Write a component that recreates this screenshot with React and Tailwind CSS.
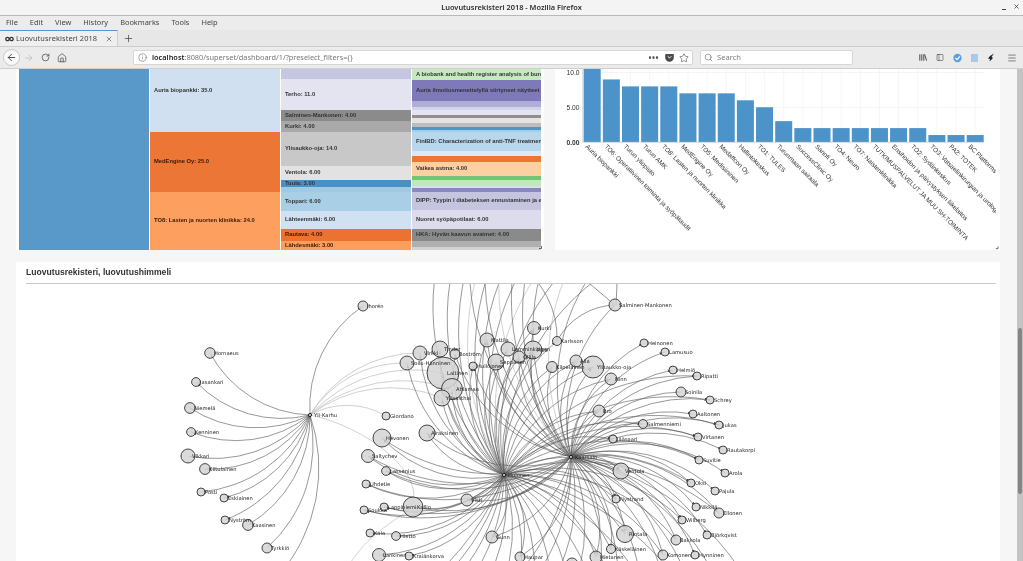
import React from "react";
import { ArrowLeft, ArrowRight, RotateCw, Home, Info, Star, Search, Menu, X, Plus, PanelLeft } from "lucide-react";

const UI = { fontFamily: '"Noto Sans", sans-serif' };

function Cell({ h, bg, label, dark, pb }) {
  return (
    <div
      className="flex items-center pl-[4px] shrink-0 whitespace-nowrap overflow-hidden font-bold text-[5.8px] leading-none"
      style={{ height: h, background: bg, color: dark ? "#3a1a08" : "#333", paddingBottom: pb || 0 }}
    >
      {label}
    </div>
  );
}

const col2 = [
  [63, "#d0e0f1", "Auria biopankki: 35.0", 0, 20],
  [60, "#ec7636", "MedEngine Oy: 25.0", 1],
  [58, "#fd9f5e", "TO8: Lasten ja nuorten klinikka: 24.0", 1],
];
const col3 = [
  [10, "#c5c7e2"],
  [31, "#e4e4f1", "Terho: 11.0"],
  [11, "#8b8b8b", "Salminen-Mankonen: 4.00"],
  [11, "#a9a9a9", "Kurki: 4.00"],
  [34, "#c8c8c8", "Ylisaukko-oja: 14.0"],
  [14, "#e2e2e2", "Ventola: 6.00"],
  [7, "#4a90c5", "Tuula: 3.00"],
  [5, "#9fcae1"],
  [19, "#a9cfe6", "Toppari: 6.00"],
  [18, "#d0e1f2", "Lähteenmäki: 6.00"],
  [12, "#ec7232", "Rautava: 4.00", 1],
  [9, "#fd9e5c", "Lähdesmäki: 3.00", 1],
];
const col4 = [
  [11, "#c7e9c0", "A biobank and health register analysis of burd"],
  [21, "#7e79b8", "Auria ilmoitusmenettelyllä siirtyneet näytteet j"],
  [6, "#b0aed6"],
  [3, "#d3d3ea"],
  [5, "#e4e4f1"],
  [3, "#8f8f8f"],
  [5, "#e4e4e4"],
  [4, "#bdbdbd"],
  [3, "#4f95c8"],
  [2, "#a8cde8"],
  [19, "#b9d7ec", "FinIBD: Characterization of anti-TNF treatment"],
  [5, "#dbe9f5"],
  [6, "#ed7637"],
  [14, "#fdd0a2", "Vaikea astma: 4.00"],
  [4, "#74c476"],
  [6, "#c0e8b8"],
  [2, "#dcdcec"],
  [4, "#8a88b8"],
  [18, "#c6c5e0", "DIPP: Tyypin I diabeteksen ennustaminen ja eh"],
  [19, "#dcdcec", "Nuoret syöpäpotilaat: 6.00"],
  [12, "#8a8a8a", "HKA: Hyvän kaavun avaimet: 4.00"],
  [6, "#b0b0b0"],
  [3, "#d2d2d2"],
];

function Column({ cells, w }) {
  return (
    <div className="flex flex-col overflow-hidden h-[181px]" style={{ width: w }}>
      {cells.map((c, i) => (
        <Cell key={i} h={c[0]} bg={c[1]} label={c[2]} dark={c[3]} pb={c[4]} />
      ))}
    </div>
  );
}

const bars = [
  ["Auria biopankki", 10.6],
  ["TO6: Operatiivinen toiminta ja syöpätaudit", 9],
  ["Turun yliopisto", 8],
  ["Turun AMK", 8],
  ["TO8: Lasten ja nuorten klinikka", 8],
  ["MedEngine Oy", 7],
  ["TO5: Medisiininen", 7],
  ["Medaffcon Oy", 7],
  ["Hallintokeskus", 6],
  ["TO1: TULES", 5],
  ["Turunmaan sairaala", 3],
  ["SuccessClinic Oy", 2],
  ["Sanofi Oy", 2],
  ["TO4: Neuro", 2],
  ["TO7: Naistenklinikka", 2],
  ["TUTKIMUSPALVELUT JA MUU SH-TOIMINTA", 2],
  ["Ensihoidon ja päivystyksen liikelaitos", 2],
  ["TO2: Sydänkeskus", 2],
  ["TO3: Vatsaelinkirurgian ja urologia", 1],
  ["PA2: TOTEK", 1],
  ["BC Platforms", 1],
];

function BarChart() {
  return (
    <svg viewBox="555 69 445 181" className="w-[445px] h-[181px] block" style={{ fontFamily: '"Liberation Sans", sans-serif' }}>
      <defs>
        <clipPath id="barclip"><rect x="555" y="69" width="441" height="181" /></clipPath>
      </defs>
      <g clipPath="url(#barclip)">
        {bars.map((b, i) => (
          <line key={i} x1={592.2 + 19.15 * i} x2={592.2 + 19.15 * i} y1="69" y2="142" stroke="#f0f0f0" strokeWidth="0.6" />
        ))}
        <line x1="583" x2="984" y1="107.5" y2="107.5" stroke="#ececec" strokeWidth="0.6" />
        <line x1="583" x2="984" y1="72.5" y2="72.5" stroke="#ececec" strokeWidth="0.6" />
        <line x1="582.8" x2="582.8" y1="69" y2="142" stroke="#c4c4c4" strokeWidth="0.7" />
        {bars.map((b, i) => (
          <rect key={i} x={583.7 + 19.15 * i} width="17" y={142 - b[1] * 6.95} height={b[1] * 6.95} fill="#4b93c9" />
        ))}
        <line x1="583" x2="984" y1="142.3" y2="142.3" stroke="#c4c4c4" strokeWidth="0.7" />
        <text x="579.5" y="75" textAnchor="end" fontSize="6.7" fill="#333">10.0</text>
        <text x="579.5" y="110" textAnchor="end" fontSize="6.7" fill="#333">5.00</text>
        <text x="579.5" y="144.5" textAnchor="end" fontSize="6.7" fontWeight="bold" fill="#333">0.00</text>
        {bars.map((b, i) => {
          const x = 585 + 19.15 * i;
          return (
            <text key={i} x={x} y="147" fontSize="6.4" fill="#333" transform={`rotate(45 ${x} 147)`}>
              {b[0]}
            </text>
          );
        })}
      </g>
      <path d="M998 246.5v2.2h-2.2" stroke="#444" strokeWidth="0.8" fill="none" />
    </svg>
  );
}

const nodes = [
  ["Ihorén", 363, 306, 5], ["Hornaeus", 210, 353, 5.3], ["Jasankari", 196, 382, 4.4], ["Niemelä", 190, 408, 5.4],
  ["Kenninen", 191, 432, 4.4], ["Vikkari", 188, 456, 7], ["Kiitulainen", 205, 469, 5.4], ["Posti", 201, 492, 4],
  ["Eskiainen", 224, 498, 4], ["Nyström", 225, 520, 4], ["Kaasinen", 248, 525, 5.4], ["Tyrkkiö", 267, 548, 5],
  ["Giordano", 386, 416, 4], ["Hevonen", 382, 438, 9], ["Airaksinen", 427, 433, 8], ["Saltychev", 368, 456, 6.5],
  ["Lassenius", 386, 471, 4.4], ["Uhdetie", 366, 484, 4], ["Soukka", 364, 510, 4], ["Lappiniemi", 384, 507, 4],
  ["Kallio", 413, 507, 10], ["Visti", 467, 500, 6], ["Kala", 370, 533, 4], ["Hietto", 396, 536, 4.4],
  ["Lankinen", 379, 555, 6.5], ["Kraiänkorva", 409, 556, 4], ["Virkki", 420, 353, 7], ["Tinder", 440, 349, 8],
  ["Boström", 455, 354, 5], ["Soilu-Hänninen", 407, 363, 7], ["Laitinen", 443, 373, 16], ["Ahlamaa", 452, 389, 10.5],
  ["Yliaasthai", 442, 398, 8], ["Hulkkonen", 473, 366, 4], ["Mattila", 487, 340, 7], ["Kurki", 534, 328, 6.5],
  ["Karlsson", 557, 341, 4.5], ["Lemminkäinen", 508, 349, 7], ["Pälä", 533, 350, 9], ["Ollila", 519, 357, 6],
  ["Seppänen", 496, 362, 8], ["Kilpeläinen", 552, 367, 5.5], ["Ylisaukko-oja", 593, 367, 11], ["Aila", 576, 361, 6],
  ["Ninn", 611, 379, 6], ["Salminen-Mankonen", 615, 305, 6], ["Heinonen", 644, 343, 4], ["Lamusuo", 665, 352, 4],
  ["Helmiö", 673, 370, 4], ["Ripatti", 697, 376, 4], ["Soinila", 681, 392, 5], ["Schrey", 710, 400, 4],
  ["Bro", 599, 411, 6], ["Aaltonen", 693, 414, 4], ["Jukas", 719, 425, 4], ["Salmenniemi", 643, 424, 4.5],
  ["Jääsaari", 613, 439, 4], ["Virtanen", 698, 437, 4], ["Rautakorpi", 723, 450, 4], ["Suvitie", 699, 460, 4],
  ["Arola", 725, 473, 4], ["Ventola", 621, 471, 8], ["Oksi", 691, 483, 4], ["Pajula", 715, 491, 4],
  ["Nystrand", 616, 499, 4], ["Nikkilä", 696, 507, 4], ["Ellonen", 719, 513, 5], ["Wilberg", 682, 520, 4],
  ["Björkqvist", 707, 535, 4], ["Rintala", 625, 534, 8.5], ["Bakkola", 676, 540, 5], ["Käskeläinen", 611, 549, 4.5],
  ["Hietanen", 596, 557, 6], ["Komonen", 663, 555, 5], ["Hynninen", 695, 555, 4], ["Gunn", 492, 537, 6],
  ["Haupar", 520, 557, 5], ["", 572, 564, 6],
];
const hubs = [
  ["Yli-Karhu", 310, 415], ["Hujonen", 504, 475], ["Kaarsalo", 571, 457],
];
const byName = Object.fromEntries(nodes.map((n) => [n[0], n]));
const H = { Y: hubs[0], A: hubs[1], B: hubs[2] };

const yk = ["Ihorén", "Hornaeus", "Jasankari", "Niemelä", "Kenninen", "Vikkari", "Kiitulainen", "Posti", "Eskiainen", "Nyström", "Kaasinen", "Tyrkkiö"];
const ykLight = ["Soilu-Hänninen", "Virkki", "Laitinen", "Ahlamaa", "Yliaasthai", "Giordano"];
const aNames = ["Hevonen", "Airaksinen", "Saltychev", "Lassenius", "Uhdetie", "Soukka", "Lappiniemi", "Kallio", "Visti", "Kala", "Hietto", "Lankinen", "Kraiänkorva", "Gunn", "Haupar", "Hietanen", "Rintala", "Käskeläinen", "Nystrand", "Ventola", "Soilu-Hänninen", "Virkki", "Tinder", "Boström", "Laitinen", "Ahlamaa", "Yliaasthai", "Hulkkonen", "Mattila", "Lemminkäinen", "Seppänen", "Ollila", "Pälä", "Kurki", "Karlsson", "Kilpeläinen", "Aila", "Ylisaukko-oja", "Ninn", "Bro", "Salmenniemi", "Jääsaari", "Ripatti", "Schrey", "Jukas", "Virtanen", "Suvitie", "Oksi", "Ellonen", "Wilberg", "Bakkola", "Komonen"];
const bNames = ["Salminen-Mankonen", "Heinonen", "Lamusuo", "Helmiö", "Ripatti", "Soinila", "Schrey", "Aaltonen", "Jukas", "Salmenniemi", "Jääsaari", "Virtanen", "Rautakorpi", "Suvitie", "Arola", "Ventola", "Oksi", "Pajula", "Nystrand", "Nikkilä", "Ellonen", "Wilberg", "Björkqvist", "Rintala", "Bakkola", "Käskeläinen", "Hietanen", "Komonen", "Hynninen", "Bro", "Ninn", "Ylisaukko-oja", "Aila", "Kilpeläinen", "Pälä", "Ollila", "Seppänen", "Mattila", "Visti", "Gunn", "Haupar", "Hulkkonen", "Boström", "Kurki", "Hevonen", "Airaksinen", "Saltychev", "Lassenius", "Uhdetie", "Kallio", "Lappiniemi", "Soukka"];
const aTop = [[440, 250], [462, 235], [482, 225], [500, 218], [516, 215], [532, 222], [548, 232], [565, 240], [590, 245], [610, 270]];
const bTop = [[470, 255], [488, 240], [506, 228], [524, 222], [540, 226], [556, 232], [585, 240], [600, 262]];
const aBottom = [300, 335, 370, 405, 440, 470, 495, 520, 545, 570, 600, 630, 665, 710].map((x) => [x, 640]);
const bBottom = [440, 480, 515, 550, 585, 610, 640, 670, 700, 735, 770].map((x) => [x, 630]);

function arc(s, tx, ty) {
  const dx = tx - s[1];
  const dy = ty - s[2];
  const r = Math.sqrt(dx * dx + dy * dy);
  return `M${s[1]} ${s[2]}A${r} ${r} 0 0 1 ${tx} ${ty}`;
}

function Edge({ s, x, y, light, marker, w }) {
  return (
    <path
      d={arc(s, x, y)}
      fill="none"
      stroke={light ? "#bdbdbd" : "#555"}
      strokeOpacity={light ? 0.9 : 0.8}
      strokeWidth={w || 0.75}
      markerEnd={marker ? "url(#arrow)" : undefined}
    />
  );
}

function Graph() {
  return (
    <svg viewBox="16 284 984 277" className="w-[984px] h-[277px] block" style={{ fontFamily: '"DejaVu Sans", sans-serif' }}>
      <defs>
        <marker id="arrow" viewBox="0 -5 10 10" refX="18" refY="0" markerWidth="3" markerHeight="3" orient="auto" markerUnits="userSpaceOnUse">
          <path d="M0 -5L10 0L0 5z" fill="#444" />
        </marker>
      </defs>
      {yk.map((n) => <Edge key={n} s={H.Y} x={byName[n][1]} y={byName[n][2]} marker />)}
      {ykLight.map((n) => <Edge key={n} s={H.Y} x={byName[n][1]} y={byName[n][2]} light w={0.8} />)}
      <path d="M310 415C380 430 440 490 402 515S360 550 345 570" fill="none" stroke="#c8c8c8" strokeWidth="0.8" />
      <Edge s={H.Y} x={279} y={575} />
      {aNames.map((n) => <Edge key={n} s={H.A} x={byName[n][1]} y={byName[n][2]} marker />)}
      {bNames.map((n) => <Edge key={n} s={H.B} x={byName[n][1]} y={byName[n][2]} marker />)}
      {aTop.map((p, i) => <Edge key={i} s={H.A} x={p[0]} y={p[1]} light={i % 4 === 3} />)}
      {bTop.map((p, i) => <Edge key={i} s={H.B} x={p[0]} y={p[1]} light={i % 4 === 2} />)}
      {aBottom.map((p, i) => <Edge key={i} s={H.A} x={p[0]} y={p[1]} />)}
      {bBottom.map((p, i) => <Edge key={i} s={H.B} x={p[0]} y={p[1]} />)}
      <Edge s={byName["Karlsson"]} x={615} y={305} />
      <Edge s={["", 515, 262]} x={557} y={341} />
      <path d="M590 284 L615 305 M617 284 L616 305" stroke="#666" strokeWidth="0.7" fill="none" />
      {nodes.map((n) => (
        <circle key={n[0] + n[1]} cx={n[1]} cy={n[2]} r={n[3]} fill="#d4d4d4" fillOpacity="0.85" stroke="#333" strokeWidth="0.9" />
      ))}
      {hubs.map((h) => <circle key={h[0]} cx={h[1]} cy={h[2]} r="1.6" fill="#ccc" stroke="#111" strokeWidth="0.9" />)}
      {nodes.map((n) => (
        <text key={n[0] + n[1]} x={n[1] + 4} y={n[2] + 2} fontSize="5.2" fill="#222">{n[0]}</text>
      ))}
      {hubs.map((h) => (
        <text key={h[0]} x={h[1] + 4} y={h[2] + 2} fontSize="5.2" fill="#222">{h[0]}</text>
      ))}
    </svg>
  );
}

function ToolIcon({ children, className }) {
  return <div className={"flex items-center justify-center text-[#4a4a4a] " + (className || "")}>{children}</div>;
}

function Chrome() {
  return (
    <div style={UI} className="shrink-0">
      <div className="h-[16px] bg-[#f4f4f4] border-b border-[#b9b9b9] flex items-center relative">
        <div className="w-full text-center text-[7.4px] font-semibold text-[#2e2e2e] leading-none">Luovutusrekisteri 2018 - Mozilla Firefox</div>
        <div className="absolute right-[3px] top-[3px] flex items-center gap-[7px] text-[#333]">
          <div className="w-[4px] h-px bg-[#444] mt-[5px]" />
          <X size={7} strokeWidth={2.5} />
        </div>
      </div>
      <div className="h-[14px] bg-[#ececec] flex items-center pl-[6px] gap-[12px] text-[7.4px] text-[#444] leading-none">
        <span>File</span><span>Edit</span><span>View</span><span>History</span><span>Bookmarks</span><span>Tools</span><span>Help</span>
      </div>
      <div className="h-[17px] bg-[#e7e7e7] border-b border-[#cdcdcd] flex items-stretch">
        <div className="w-[118px] shrink-0 bg-[#efefef] border-t border-t-[#5b94d6] border-r border-r-[#cfcfcf] flex items-center pl-[5px] text-[7.4px] text-[#444] leading-none whitespace-nowrap">
          <svg width="9" height="6" viewBox="0 0 18 10" fill="none" stroke="#333" strokeWidth="2.6">
            <circle cx="5" cy="5" r="3.4" /><circle cx="13" cy="5" r="3.4" />
          </svg>
          <span className="ml-[2px] tracking-[0.1px]">Luovutusrekisteri 2018</span>
          <X size={8} className="ml-auto mr-[4px] text-[#555]" />
        </div>
        <div className="flex items-center ml-[5px]"><Plus size={11} strokeWidth={1.6} className="text-[#444]" /></div>
      </div>
      <div className="h-[22px] bg-[#ebebeb] border-b border-[#cfcfcf] flex items-center">
        <div className="ml-[3px] w-[17px] h-[17px] rounded-full bg-[#fafafa] border border-[#c6c6c6] flex items-center justify-center">
          <ArrowLeft size={11} strokeWidth={1.8} className="text-[#333]" />
        </div>
        <ToolIcon className="ml-[2px] w-[14px] text-[#b5b5b5]"><ArrowRight size={10} strokeWidth={1.6} /></ToolIcon>
        <ToolIcon className="ml-[2px] w-[14px]"><RotateCw size={9} strokeWidth={2} /></ToolIcon>
        <ToolIcon className="ml-[3px] w-[14px]"><Home size={10} strokeWidth={1.8} /></ToolIcon>
        <div className="ml-[64px] w-[560px] h-[15px] bg-white border border-[#d6d6d6] rounded-[2px] flex items-center pl-[4px] pr-[2px] text-[7.35px] text-[#777] leading-none">
          <Info size={9} strokeWidth={1.5} className="text-[#666]" />
          <span className="ml-[5px] whitespace-nowrap"><span className="text-[#222] font-semibold">localhost</span>:8080/superset/dashboard/1/?preselect_filters={"{}"}</span>
          <span className="ml-auto font-bold text-[#555] tracking-[0.5px] text-[8px]">•••</span>
          <svg className="ml-[6px]" width="9" height="9" viewBox="0 0 10 10"><path d="M1 1h8a.8.8 0 0 1 .8.8V5A4.7 4.7 0 0 1 .2 5V1.8A.8.8 0 0 1 1 1z" fill="#4a4a4a" /><path d="M3 3.6l2 2 2-2" stroke="#fff" strokeWidth="1.1" fill="none" /></svg>
          <Star size={10} strokeWidth={1.4} className="ml-[5px] mr-[1px] text-[#444]" />
        </div>
        <div className="ml-[7px] w-[153px] h-[15px] bg-white border border-[#d6d6d6] rounded-[2px] flex items-center pl-[3px] text-[7.6px] text-[#808080] leading-none">
          <Search size={9} strokeWidth={1.6} className="text-[#666]" />
          <span className="ml-[4px]">Search</span>
        </div>
        <ToolIcon className="ml-[66px] w-[8px]">
          <svg width="9" height="9" viewBox="0 0 10 10" stroke="#444" strokeWidth="1.2" fill="none"><path d="M1 1v8M3.5 1v8M6 1v8M7 1l2.5 8" /></svg>
        </ToolIcon>
        <ToolIcon className="ml-[9px] w-[8px]"><PanelLeft size={9} strokeWidth={1.8} /></ToolIcon>
        <ToolIcon className="ml-[9px] w-[9px]">
          <svg width="10" height="10" viewBox="0 0 10 10"><circle cx="5" cy="5" r="4.6" fill="#5a9fe0" /><path d="M2.6 4.8l2 2 3-3.6" stroke="#fff" strokeWidth="1.3" fill="none" /></svg>
        </ToolIcon>
        <ToolIcon className="ml-[8px] w-[8px]"><div className="w-[7px] h-[8px] bg-[#a9c9e6]" /></ToolIcon>
        <ToolIcon className="ml-[9px] w-[8px]">
          <svg width="8" height="9" viewBox="0 0 8 9"><path d="M7 0.5L3 3 1 5.5l2 .5-.5 2.5L6 5 4.5 4z" fill="#222" /></svg>
        </ToolIcon>
        <ToolIcon className="ml-[12px] w-[10px]"><Menu size={10} strokeWidth={1.6} /></ToolIcon>
      </div>
    </div>
  );
}

export default function App() {
  return (
    <div className="w-[1023px] h-[561px] overflow-hidden flex flex-col bg-white blur-[0.35px]" style={{ fontFamily: '"Liberation Sans", sans-serif' }}>
      <Chrome />
      <div className="flex flex-1 min-h-0">
        <div className="w-[1017px] bg-[#f6f6f6] pl-[16px] flex flex-col gap-[12px] overflow-hidden">
          <div className="flex gap-[11px] shrink-0 h-[181px]">
            <div className="w-[528px] bg-white pl-[3px] flex gap-px relative">
              <Column cells={[[181, "#5899ca"]]} w={130} />
              <Column cells={col2} w={130} />
              <Column cells={col3} w={130} />
              <Column cells={col4} w={129} />
              <svg width="4" height="4" viewBox="0 0 4 4" className="absolute right-[2px] bottom-[1px]"><path d="M3.5 1v2.5H1" stroke="#444" strokeWidth="0.8" fill="none" /></svg>
            </div>
            <div className="w-[445px] bg-white"><BarChart /></div>
          </div>
          <div className="w-[984px] flex-1 bg-white flex flex-col min-h-0">
            <div className="mx-[10px] mr-[4px] h-[22px] border-b border-[#c9c9c9] flex items-center text-[8.6px] font-bold text-[#333] leading-none shrink-0">
              Luovutusrekisteri, luovutushimmeli
            </div>
            <Graph />
          </div>
        </div>
        <div className="w-[6px] bg-[#c4c4c4] pt-[259px] pl-px pr-px">
          <div className="h-[166px] bg-[#858585] rounded-full" />
        </div>
      </div>
    </div>
  );
}
